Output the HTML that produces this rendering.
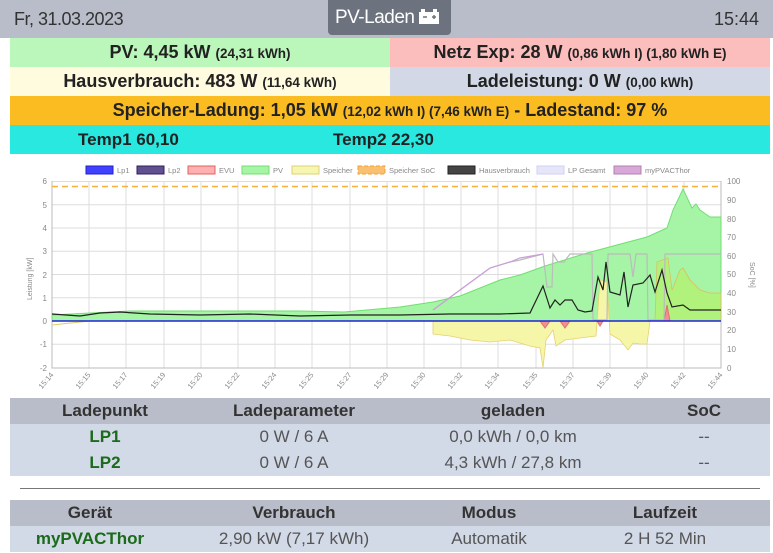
<!DOCTYPE html>
<html><head><meta charset="utf-8"><style>
*{margin:0;padding:0;box-sizing:border-box}
body{width:773px;height:553px;overflow:hidden;background:#fff;font-family:"Liberation Sans",sans-serif;color:#222}
.hdr{position:absolute;left:0;top:0;width:773px;height:38px;background:#b9bdc9}
.hdr .d{position:absolute;left:14px;top:9px;font-size:18px;color:#333;letter-spacing:-0.5px}
.hdr .t{position:absolute;right:14px;top:9px;font-size:18px;color:#333}
.btn{position:absolute;left:328px;top:0;width:123px;height:35px;background:#6c737e;border-radius:0 0 4px 4px;color:#fff;font-size:19px;padding:7px 0 0 7px;letter-spacing:-0.5px}
.row{position:absolute;height:29px;font-weight:bold;font-size:18px;text-align:center;line-height:29px}
.row small{font-size:13.5px}
table{position:absolute;left:10px;width:760px;border-collapse:collapse;text-align:center;font-size:17px;table-layout:fixed}
th{background:#b9bdc9;height:26px;font-weight:bold;color:#333}
td{background:#d2d9e7;height:26px;color:#555}
td.g{color:#1a6b1a;font-weight:bold}
</style></head><body>
<div class="hdr"><div class="d">Fr, 31.03.2023</div><div class="t">15:44</div></div>
<div class="btn">PV-Laden <svg width="20" height="15" viewBox="0 0 20 15" style="vertical-align:-1px"><rect x="2" y="0" width="4" height="3" fill="#fff"/><rect x="14" y="0" width="4" height="3" fill="#fff"/><rect x="0" y="3" width="20" height="12" fill="#fff"/><path d="M4 8h4M13 8h4M15 6v4" stroke="#6c737e" stroke-width="1.5"/></svg></div>
<div class="row" style="left:10px;top:38px;width:380px;background:#bbf6bb">PV: 4,45 kW <small>(24,31 kWh)</small></div>
<div class="row" style="left:390px;top:38px;width:380px;background:#fcbdbd">Netz Exp: 28 W <small>(0,86 kWh I) (1,80 kWh E)</small></div>
<div class="row" style="left:10px;top:67px;width:380px;background:#fefbdf">Hausverbrauch: 483 W <small>(11,64 kWh)</small></div>
<div class="row" style="left:390px;top:67px;width:380px;background:#d2d8e6">Ladeleistung: 0 W <small>(0,00 kWh)</small></div>
<div class="row" style="left:10px;top:96px;width:760px;background:#fbbc22">Speicher-Ladung: 1,05 kW <small>(12,02 kWh I) (7,46 kWh E)</small> - Ladestand: 97 %</div>
<div class="row" style="left:10px;top:125px;width:760px;background:#28e8e0;text-align:left;font-size:17px"><span style="position:absolute;left:68px">Temp1 60,10</span><span style="position:absolute;left:323px">Temp2 22,30</span></div>

<svg style="position:absolute;left:0;top:160px" width="773" height="230" viewBox="0 160 773 230" font-family="Liberation Sans,sans-serif" font-size="8" fill="#888">
<g stroke="#ddd" stroke-width="1">
<path d="M52 181.5H721M52 204.8H721M52 228H721M52 251.3H721M52 274.5H721M52 297.8H721M52 321H721M52 344.3H721"/>
<path d="M89 181V368M126 181V368M164 181V368M201 181V368M238 181V368M275 181V368M312 181V368M350 181V368M387 181V368M424 181V368M461 181V368M498 181V368M536 181V368M573 181V368M610 181V368M647 181V368M684 181V368M721 181V368"/>
</g>
<path d="M52 181V368H721V181" fill="none" stroke="#bbb"/>
<g text-anchor="end"><text x="47" y="184">6</text><text x="47" y="208">5</text><text x="47" y="231">4</text><text x="47" y="254">3</text><text x="47" y="278">2</text><text x="47" y="301">1</text><text x="47" y="324">0</text><text x="47" y="347">-1</text><text x="47" y="371">-2</text></g>
<g><text x="727" y="184">100</text><text x="727" y="203">90</text><text x="727" y="222">80</text><text x="727" y="240">70</text><text x="727" y="259">60</text><text x="727" y="277">50</text><text x="727" y="296">40</text><text x="727" y="315">30</text><text x="727" y="333">20</text><text x="727" y="352">10</text><text x="727" y="371">0</text></g>
<text transform="translate(32,300) rotate(-90)" font-size="7">Leistung [kW]</text>
<text transform="translate(750,262) rotate(90)" font-size="7">SoC [%]</text>
<path d="M52 315L90 313L130 311L200 311L300 311L344 312L400 307L433 302L460 296L500 280L520 275L545 266L587 253L647 237L667 228L673 210L683 189L692 208L696 204L700 210L710 217L721 217V321H52Z" fill="#a6f5a6" stroke="#6fe06f" stroke-width="1"/>
<path d="M433 321L433 334L450 336L470 340L490 342L510 340L530 346L540 348L543 368L546 340L553 330L556 346L565 340L580 338L596 336L600 280L607 282L610 334L620 340L628 350L633 343L640 344L647 344L650 321Z" fill="#f5f6a8" stroke="#e8d070" stroke-width="0.8"/>
<path d="M52 325L70 323L90 321Z" fill="#f5f6a8" stroke="#e0d070"/>
<path d="M655 321L657 262L668 258L672 290L680 270L683 268L690 280L700 290L710 293L721 293V321Z" fill="#b8f060" fill-opacity="0.6" stroke="#d8c060" stroke-width="0.8"/>
<path d="M540 321L545 328L550 321M560 321L565 328L570 321M597 321L600 326L603 321M664 321L667 305L670 321" fill="#f09090" stroke="#e07070"/>
<path d="M433 310L460 290L490 268L510 262L520 260L543 254L547 287L552 287L553 254L558 262L564 262L570 254L592 254L593 320L607 320L608 254L630 254L633 277L636 254L647 254L648 320L664 320L665 254L721 254" fill="none" stroke="#bbb" stroke-width="1.2"/>
<path d="M433 310L460 290L490 268L510 262L520 258L543 254" fill="none" stroke="#c9a0d8" stroke-width="1.2"/>
<path d="M52 314L80 316L100 313L120 312L150 314L200 315L250 314L300 316L350 315L400 315L450 314L500 314L530 313L543 286L550 308L555 300L560 305L565 300L572 300L578 310L585 312L592 311L598 277L603 290L606 262L610 292L620 295L624 272L628 307L633 285L643 283L650 275L655 292L662 270L667 293L672 307L683 305L690 310L721 310" fill="none" stroke="#222" stroke-width="1.2"/>
<path d="M52 321H721" stroke="#2222dd" stroke-width="1.5"/>
<path d="M52 186.5H721" stroke="#f5b040" stroke-width="1.5" stroke-dasharray="6,4"/>
<g font-size="7.5">
<rect x="86" y="166" width="27" height="8" fill="#4040ff" stroke="#2020cc"/><text x="117" y="173">Lp1</text>
<rect x="137" y="166" width="27" height="8" fill="#60508f" stroke="#302060"/><text x="168" y="173">Lp2</text>
<rect x="188" y="166" width="27" height="8" fill="#ffb0b0" stroke="#e06060"/><text x="219" y="173">EVU</text>
<rect x="242" y="166" width="27" height="8" fill="#a6f5a6" stroke="#70e070"/><text x="273" y="173">PV</text>
<rect x="292" y="166" width="27" height="8" fill="#f5f6b0" stroke="#e0d070"/><text x="323" y="173">Speicher</text>
<rect x="358" y="166" width="27" height="8" fill="#f8c070" stroke="#f5a030" stroke-dasharray="4,2"/><text x="389" y="173">Speicher SoC</text>
<rect x="448" y="166" width="27" height="8" fill="#444" stroke="#222"/><text x="479" y="173">Hausverbrauch</text>
<rect x="537" y="166" width="27" height="8" fill="#e6e6fa" stroke="#d0d0f0"/><text x="568" y="173">LP Gesamt</text>
<rect x="614" y="166" width="27" height="8" fill="#d8a8d8" stroke="#b080b0"/><text x="645" y="173">myPVACThor</text>
</g>
<g font-size="7.5" text-anchor="end">
<text transform="translate(54,375) rotate(-50)">15:14</text><text transform="translate(91,375) rotate(-50)">15:15</text><text transform="translate(128,375) rotate(-50)">15:17</text><text transform="translate(166,375) rotate(-50)">15:19</text><text transform="translate(203,375) rotate(-50)">15:20</text><text transform="translate(240,375) rotate(-50)">15:22</text><text transform="translate(277,375) rotate(-50)">15:24</text><text transform="translate(314,375) rotate(-50)">15:25</text><text transform="translate(352,375) rotate(-50)">15:27</text><text transform="translate(389,375) rotate(-50)">15:29</text><text transform="translate(426,375) rotate(-50)">15:30</text><text transform="translate(463,375) rotate(-50)">15:32</text><text transform="translate(500,375) rotate(-50)">15:34</text><text transform="translate(538,375) rotate(-50)">15:35</text><text transform="translate(575,375) rotate(-50)">15:37</text><text transform="translate(612,375) rotate(-50)">15:39</text><text transform="translate(649,375) rotate(-50)">15:40</text><text transform="translate(686,375) rotate(-50)">15:42</text><text transform="translate(723,375) rotate(-50)">15:44</text>
</g>
</svg>

<table style="top:398px">
<colgroup><col style="width:190px"><col style="width:188px"><col style="width:250px"><col style="width:132px"></colgroup>
<tr><th>Ladepunkt</th><th>Ladeparameter</th><th>geladen</th><th>SoC</th></tr>
<tr><td class="g">LP1</td><td>0 W / 6 A</td><td>0,0 kWh / 0,0 km</td><td>--</td></tr>
<tr><td class="g">LP2</td><td>0 W / 6 A</td><td>4,3 kWh / 27,8 km</td><td>--</td></tr>
</table>
<div style="position:absolute;left:20px;top:488px;width:740px;height:1px;background:#777"></div>
<table style="top:500px">
<colgroup><col style="width:160px"><col style="width:248px"><col style="width:142px"><col style="width:210px"></colgroup>
<tr><th>Gerät</th><th>Verbrauch</th><th>Modus</th><th>Laufzeit</th></tr>
<tr><td class="g">myPVACThor</td><td>2,90 kW (7,17 kWh)</td><td>Automatik</td><td>2 H 52 Min</td></tr>
</table>
</body></html>
